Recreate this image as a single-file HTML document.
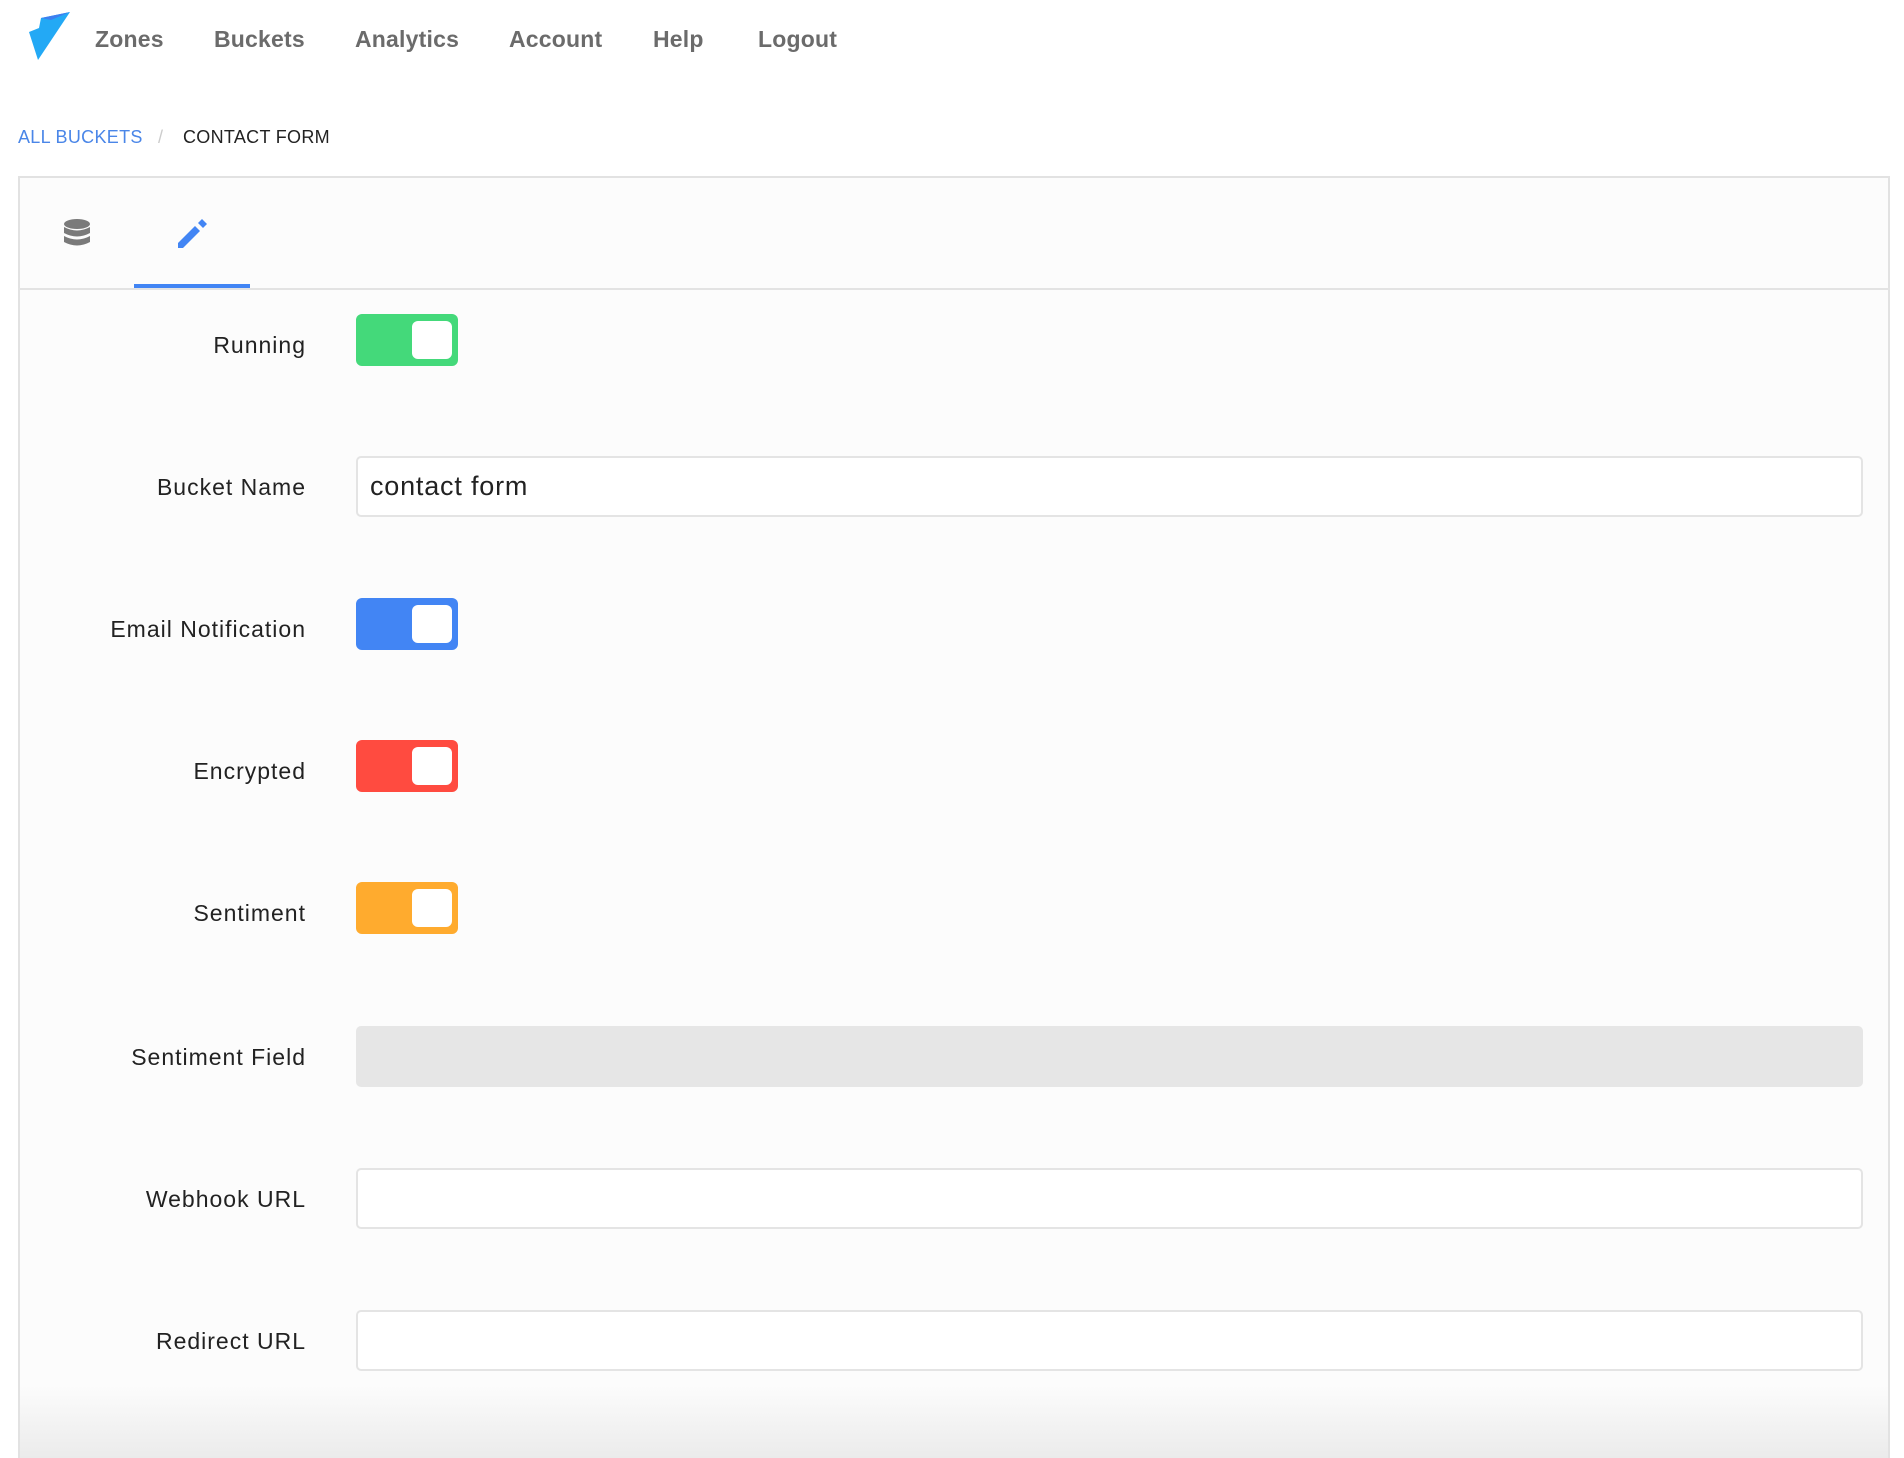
<!DOCTYPE html>
<html style="overflow:hidden"><head><meta charset="utf-8">
<style>
*{box-sizing:border-box;margin:0;padding:0}
html,body{width:1904px;height:1458px;overflow:hidden}
body{background:#fff;font-family:"Liberation Sans",sans-serif;position:relative;color:#222}
.nav{position:absolute;top:26px;font-size:23px;color:#6b6b6b;font-weight:bold;letter-spacing:0.2px}
.bc{position:absolute;top:127px;font-size:18px;letter-spacing:0.3px}
.card{position:absolute;left:18px;top:176px;width:1872px;height:1282px;border:2px solid #e2e2e2;border-bottom:none;background:#fcfcfc}
.tabline{position:absolute;left:18px;top:288px;width:1872px;height:2px;background:#e3e3e3}
.lbl{position:absolute;right:1598px;font-size:23px;letter-spacing:1px;color:#222;white-space:nowrap}
.tg{position:absolute;left:356px;width:102px;height:52px;border-radius:6px}
.tg::after{content:"";position:absolute;left:56px;top:7px;width:40px;height:38px;background:#fff;border-radius:6px}
.inp{position:absolute;left:356px;width:1507px;height:61px;border:2px solid #e4e4e4;border-radius:5px;background:#fff}
.shade{position:absolute;left:20px;top:1385px;width:1868px;height:73px;background:linear-gradient(#fcfcfc,#ebebeb)}
</style></head><body>
<svg style="position:absolute;left:29px;top:12px" width="42" height="48" viewBox="0 0 42 48">
<polygon points="12,6 41,0 9,48 0,20 10,16" fill="#23a9f5"/>
<polygon points="12,6 41,0 22,8" fill="#3d7ff0"/>
</svg>
<div class="nav" style="left:95px">Zones</div>
<div class="nav" style="left:214px">Buckets</div>
<div class="nav" style="left:355px">Analytics</div>
<div class="nav" style="left:509px">Account</div>
<div class="nav" style="left:653px">Help</div>
<div class="nav" style="left:758px">Logout</div>
<div class="bc" style="left:18px;color:#4a86e8">ALL BUCKETS</div>
<div class="bc" style="left:158px;color:#ccc">/</div>
<div class="bc" style="left:183px;color:#222">CONTACT FORM</div>
<div class="card"></div>
<div class="tabline"></div>
<svg style="position:absolute;left:64px;top:219px" width="26" height="28" viewBox="0 0 26 28">
<ellipse cx="13" cy="5" rx="13" ry="5" fill="#7a7a7a"/>
<path d="M0 8 Q13 15 26 8 V14 Q13 21 0 14Z" fill="#7a7a7a"/>
<path d="M0 17 Q13 24 26 17 V23 Q13 30 0 23Z" fill="#7a7a7a"/>
</svg>
<svg style="position:absolute;left:178px;top:219px" width="30" height="30" viewBox="0 0 30 30">
<polygon points="0,24 0,29 5,29 22,12 17,7" fill="#4285f4"/>
<polygon points="20,4 25,9 29,5 24,0" fill="#4285f4"/>
</svg>
<div style="position:absolute;left:134px;top:284px;width:116px;height:4px;background:#4285f4"></div>

<div class="lbl" style="top:332px">Running</div>
<div class="tg" style="top:314px;background:#44d97a"></div>

<div class="lbl" style="top:474px">Bucket Name</div>
<div class="inp" style="top:456px"><span style="position:absolute;left:12px;top:13px;font-size:27px;letter-spacing:0.8px;color:#222">contact form</span></div>

<div class="lbl" style="top:616px">Email Notification</div>
<div class="tg" style="top:598px;background:#4285f4"></div>

<div class="lbl" style="top:758px">Encrypted</div>
<div class="tg" style="top:740px;background:#ff4b40"></div>

<div class="lbl" style="top:900px">Sentiment</div>
<div class="tg" style="top:882px;background:#ffab2e"></div>

<div class="lbl" style="top:1044px">Sentiment Field</div>
<div class="inp" style="top:1026px;background:#e6e6e6;border-color:#e6e6e6"></div>

<div class="lbl" style="top:1186px">Webhook URL</div>
<div class="inp" style="top:1168px"></div>

<div class="lbl" style="top:1328px">Redirect URL</div>
<div class="inp" style="top:1310px"></div>

<div class="shade"></div>
</body></html>
